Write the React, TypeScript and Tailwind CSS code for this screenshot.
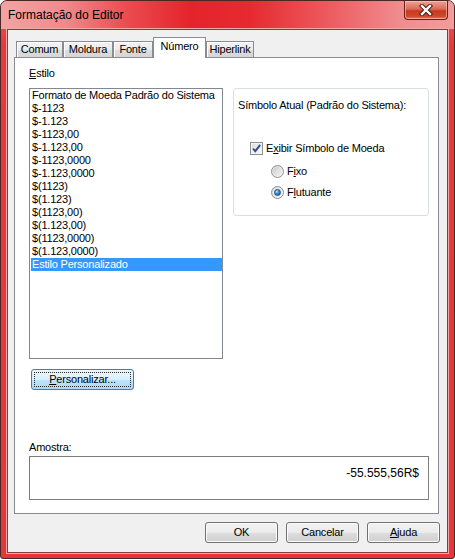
import React from "react";

const items = [
  "Formato de Moeda Padrão do Sistema",
  "$-1123",
  "$-1.123",
  "$-1123,00",
  "$-1.123,00",
  "$-1123,0000",
  "$-1.123,0000",
  "$(1123)",
  "$(1.123)",
  "$(1123,00)",
  "$(1.123,00)",
  "$(1123,0000)",
  "$(1.123,0000)",
  "Estilo Personalizado",
];

function CloseButton() {
  return (
    <div className="mr-[6px] w-[44px] h-[19px] rounded-b-[4px] border border-t-0 border-[#6e1e16] bg-[linear-gradient(180deg,#eba497_0%,#dd6a55_45%,#c7381e_55%,#cf4a2e_85%,#e27b5f_100%)] shadow-[inset_0_0_0_1px_rgba(255,210,200,0.55)] flex items-center justify-center">
      <svg width="14" height="12" viewBox="0 0 14 12">
        <path d="M3 2 L11 10 M11 2 L3 10" stroke="#4d1a12" strokeWidth="4.4" strokeLinecap="square" />
        <path d="M3 2 L11 10 M11 2 L3 10" stroke="#ffffff" strokeWidth="2.4" strokeLinecap="square" />
      </svg>
    </div>
  );
}

function Tab({ label, w, selected }: { label: string; w: number; selected?: boolean }) {
  if (selected) {
    return (
      <div
        className="relative z-10 -mb-px h-[21px] border border-b-0 border-[#898c95] bg-white flex justify-center pt-[2px] text-[11px] leading-[13px] tracking-[-0.2px]"
        style={{ width: w }}
      >
        {label}
      </div>
    );
  }
  return (
    <div
      className="h-[16px] border border-b-0 border-[#898c95] bg-[linear-gradient(180deg,#f3f3f3_0%,#ebebeb_50%,#dddddd_51%,#d6d6d6_100%)] shadow-[inset_1px_1px_0_#ffffff] flex items-center justify-center text-[11px] leading-[13px] tracking-[-0.2px]"
      style={{ width: w }}
    >
      {label}
    </div>
  );
}

function Btn({ children }: { children: React.ReactNode }) {
  return (
    <div className="w-[73px] h-[21px] rounded-[3px] border border-[#707070] bg-[linear-gradient(180deg,#f2f2f2_0%,#ebebeb_50%,#dddddd_51%,#cfcfcf_100%)] shadow-[inset_0_0_0_1px_#fcfcfc] flex items-center justify-center text-[11px] leading-[13px] tracking-[-0.2px]">
      {children}
    </div>
  );
}

function Radio({ checked }: { checked?: boolean }) {
  return (
    <div className="w-[13px] h-[13px] rounded-full border border-[#8e8f8f] bg-[linear-gradient(135deg,#dcdcdc_0%,#f6f6f6_100%)] flex items-center justify-center">
      {checked ? (
        <div className="w-[7px] h-[7px] rounded-full bg-[radial-gradient(circle_at_35%_30%,#b9e3fa_0%,#3b8fd0_45%,#0b4e8f_100%)] border border-[#1b4f87]" />
      ) : (
        <div className="w-[9px] h-[9px] rounded-full bg-[linear-gradient(135deg,#cbcbcb_0%,#f4f4f4_100%)]" />
      )}
    </div>
  );
}

function Check() {
  return (
    <div className="w-[13px] h-[13px] border border-[#8e8f8f] bg-[linear-gradient(135deg,#dcdcdc_0%,#fbfbfb_100%)] shadow-[inset_0_0_0_1px_#f4f4f4] flex items-center justify-center">
      <svg width="11" height="11" viewBox="0 0 11 11">
        <path d="M2 5.5 L4.3 8.2 L9.2 1.8" fill="none" stroke="#2b4a9a" strokeWidth="1.9" />
      </svg>
    </div>
  );
}

function U({ children }: { children: React.ReactNode }) {
  return <span className="underline underline-offset-[1px]">{children}</span>;
}

export default function App() {
  return (
    <div className="w-[455px] h-[559px] bg-white font-['Liberation_Sans',Arial,sans-serif] text-black">
      <div className="w-[455px] h-[559px] rounded-t-[7px] rounded-b-[3px] border border-[#4a2626] bg-[linear-gradient(180deg,#ea5a5e_0%,#e5393e_8%,#e4373c_100%)] flex flex-col overflow-hidden">
        {/* title bar */}
        <div className="h-[28px] flex items-start justify-between bg-[linear-gradient(90deg,#f3a4a4_0%,#f08a8c_14%,#ea4b50_28%,#e5232b_42%,#e62a30_55%,#ec5a5e_72%,#f08c8e_88%,#f29c9c_100%)]">
          <span className="pl-[7px] pt-[7px] text-[12px] leading-[15px]">Formatação do Editor</span>
          <CloseButton />
        </div>
        {/* client */}
        <div className="mx-[6px] mb-[5px] flex-1 border border-[#8a3a3a] shadow-[0_0_0_1px_#f3a7a7] bg-[#f0f0f0] flex flex-col pt-[7px]">
          <div className="ml-[8px] h-[20px] flex items-end">
            <Tab label="Comum" w={47} />
            <Tab label="Moldura" w={50} />
            <Tab label="Fonte" w={40} />
            <Tab label="Número" w={53} selected />
            <Tab label="Hiperlink" w={48} />
          </div>
          <div className="ml-[6px] w-[425px] h-[457px] border border-[#898c95] bg-white pt-[9px] pl-[14px] flex flex-col text-[11px] leading-[13px] tracking-[-0.2px]">
            <div className="flex items-start">
              <div className="w-[194px] flex flex-col">
                <div className="h-[13px]">
                  <U>E</U>stilo
                </div>
                <div className="mt-[8px] h-[271px] border border-[#828790] bg-white flex flex-col">
                  {items.map((it, i) =>
                    i === items.length - 1 ? (
                      <div key={i} className="ml-px h-[13px] bg-[#3399ff] text-white pl-px whitespace-nowrap">
                        {it}
                      </div>
                    ) : (
                      <div key={i} className="h-[13px] pl-[2px] whitespace-nowrap">
                        {it}
                      </div>
                    )
                  )}
                </div>
              </div>
              <div className="ml-[10px] mt-[21px] w-[196px] h-[128px] rounded-[3px] border border-[#d5dfe5] bg-white flex flex-col pt-[10px]">
                <div className="pl-[4px] h-[13px] whitespace-nowrap">Símbolo Atual (Padrão do Sistema):</div>
                <div className="mt-[30px] pl-[16px] h-[13px] flex items-center gap-[3px]">
                  <Check />
                  <span>
                    E<U>x</U>ibir Símbolo de Moeda
                  </span>
                </div>
                <div className="mt-[10px] pl-[37px] h-[13px] flex items-center gap-[3px]">
                  <Radio />
                  <span>
                    F<U>i</U>xo
                  </span>
                </div>
                <div className="mt-[8px] pl-[37px] h-[13px] flex items-center gap-[3px]">
                  <Radio checked />
                  <span>
                    F<U>l</U>utuante
                  </span>
                </div>
              </div>
            </div>
            <div className="mt-[10px] ml-[2px] w-[103px] h-[21px] rounded-[3px] border border-[#3c7fb1] bg-[linear-gradient(180deg,#eaf6fd_0%,#d9f0fc_50%,#bee6fd_51%,#a7d9f5_100%)] p-[2px]">
              <div className="w-full h-full border border-dotted border-[#2a2a2a] flex items-center justify-center">
                <span>
                  <U>P</U>ersonalizar...
                </span>
              </div>
            </div>
            <div className="mt-[51px] h-[13px]">Amostra:</div>
            <div className="mt-[2px] w-[400px] h-[44px] border border-[#7d7d7d] bg-white flex justify-end pt-[9px] pr-[9px] text-[12px] leading-[14px] tracking-normal">
              -55.555,56R$
            </div>
          </div>
          <div className="mt-[8px] pr-[7px] flex justify-end gap-[8px]">
            <Btn>OK</Btn>
            <Btn>Cancelar</Btn>
            <Btn>
              <span>
                <U>A</U>juda
              </span>
            </Btn>
          </div>
        </div>
      </div>
    </div>
  );
}
